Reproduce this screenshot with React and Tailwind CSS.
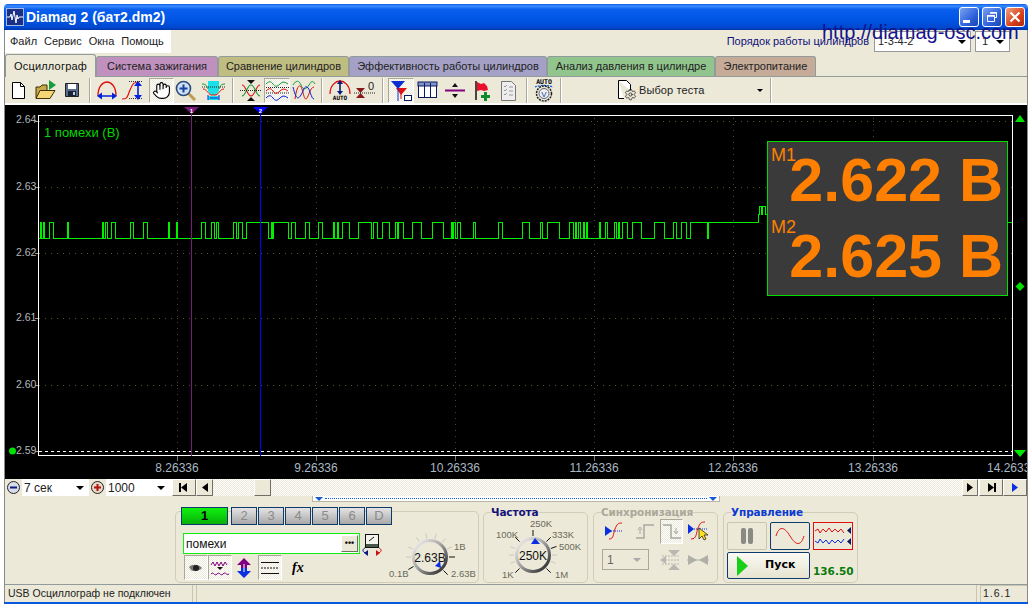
import { Hand, Settings } from "lucide-react";

const FONT = "font-['Liberation_Sans',sans-serif]";

// high parts of the noise trace, in page x
const HIGH = [
  [40, 41], [43, 44], [49, 53], [67, 68], [102, 103], [105, 107], [111, 115], [130, 133], [143, 147],
  [168, 169], [176, 177], [201, 205], [211, 214], [216, 218], [233, 236], [238, 242], [246, 268], [271, 272], [273, 288],
  [291, 295], [305, 309], [318, 322], [333, 334], [337, 338], [342, 349], [358, 371], [373, 377], [382, 389],
  [395, 397], [398, 403], [412, 421], [432, 443], [451, 452], [453, 455], [457, 460], [473, 475], [498, 502], [522, 529],
  [540, 542], [547, 559], [569, 573], [575, 576], [578, 580], [583, 584], [586, 587], [599, 600], [605, 607], [614, 616],
  [618, 619], [622, 627], [632, 641], [654, 664], [673, 676], [681, 686], [690, 707],
];
const HI = 222.5;
const LO = 238.5;

function tracePoints() {
  let pts = `39,${LO}`;
  HIGH.forEach(([a, b]) => {
    pts += ` ${a},${LO} ${a},${HI} ${b},${HI} ${b},${LO}`;
  });
  // stays on the upper level after 708, then the short burst behind the panel
  return pts + ` 708,${LO} 708,${HI} 758,${HI} 758,214 759,214 759,206 761,206 761,214 762,214 762,206 765,206 765,214 767,214`;
}

const GRID_Y = [121, 187, 253, 318, 385];
const GRID_X = [177, 316, 455, 594, 733, 873];
const Y_LABELS = [["2.64", 123], ["2.63", 190], ["2.62", 256], ["2.61", 321], ["2.60", 388], ["2.59", 454]];
const X_LABELS = [["8.26336", 177], ["9.26336", 316], ["10.26336", 455], ["11.26336", 594], ["12.26336", 733], ["13.26336", 873], ["14.26336", 1012]];

function Chart() {
  return (
    <div className="relative h-[374px] bg-black">
      <svg width="1022" height="374" viewBox="5 105 1022 374" className="block">
        <g shapeRendering="crispEdges">
          {GRID_Y.map((y) => (
            <line key={y} x1="39" x2="1012" y1={y + 0.5} y2={y + 0.5} stroke="#55552a" strokeDasharray="1 5" />
          ))}
          {GRID_X.map((x) => (
            <line key={x} x1={x + 0.5} x2={x + 0.5} y1="118" y2="451" stroke="#4a4a20" strokeDasharray="1 5" />
          ))}
          {X_LABELS.map(([, x]) => (
            <line key={x} x1={x + 0.5} x2={x + 0.5} y1="456" y2="461" stroke="#777" />
          ))}
          {GRID_Y.concat(451).map((y) => (
            <line key={y} x1="35" x2="39" y1={y + 0.5} y2={y + 0.5} stroke="#999" />
          ))}
          <rect x="38.5" y="115.5" width="974" height="340" fill="none" stroke="#fff" />
          <line x1="39" x2="1012" y1="451.5" y2="451.5" stroke="#fff" strokeDasharray="3 3" />
          <polyline points={tracePoints()} fill="none" stroke="#00f000" />
          <polyline points={`1007,${HI} 1012,${HI}`} fill="none" stroke="#00f000" />
          <line x1="191.5" x2="191.5" y1="112" y2="456" stroke="#7a1a7a" />
          <line x1="260.5" x2="260.5" y1="112" y2="456" stroke="#0000ff" />
        </g>
        <polygon points="184,107 199,107 191.5,114" fill="#7a1a7a" />
        <polygon points="253,107 268,107 260.5,114" fill="#0000ff" />
        <text x="191.5" y="112.5" fontSize="6" fontWeight="700" fill="#fff" textAnchor="middle">1</text>
        <text x="260.5" y="112.5" fontSize="6" fontWeight="700" fill="#fff" textAnchor="middle">2</text>
        {Y_LABELS.map(([t, y]) => (
          <text key={t} x="16" y={y} fontSize="10.5" fill="#b4b8bc">{t}</text>
        ))}
        {X_LABELS.map(([t, x]) => (
          <text key={t} x={x} y="472" fontSize="12" fill="#a8b8c4" textAnchor="middle">{t}</text>
        ))}
        <polygon points="1020,115 1025,122 1015,122" fill="#00e000" />
        <polygon points="1020,282 1024.5,286.5 1020,291 1015.5,286.5" fill="#00e000" />
        <polygon points="1014,450 1026,450 1020,457" fill="#00e800" />
        <circle cx="12.5" cy="451" r="3.5" fill="#00e000" />
      </svg>
      <div className="absolute left-[39px] top-[20px] text-[13px] leading-[16px] text-[#00d800]">1 помехи (В)</div>
      <div className="absolute left-[762px] top-[36px] h-[155px] w-[241px] bg-[#00e000] p-[1px]">
        <div className="relative h-full bg-[#3a3a3a] text-[#ff8000]">
          <div className="absolute left-[3px] top-[3px] text-[18px] leading-[20px]">M1</div>
          <div className="absolute left-[3px] top-[75px] text-[18px] leading-[20px]">M2</div>
          <div className="pr-[4px] text-right text-[61px] font-bold leading-[76px]">
            <div>2.622 В</div>
            <div>2.625 В</div>
          </div>
        </div>
      </div>
    </div>
  );
}

function Icon({ children, w = 22, h = 22 }) {
  return <svg width={w} height={h} viewBox={`0 0 ${w} ${h}`} className="block">{children}</svg>;
}

const IconNew = () => (
  <Icon>
    <path d="M5.500 3.500h8l4 4v12h-12z" fill="#fff" stroke="#000" />
    <path d="M13.500 3.500v4h4" fill="none" stroke="#000" />
  </Icon>
);
const IconOpen = () => (
  <Icon w={26}>
    <path d="M4 19v-11h4l2-2h5v13z" fill="#c9a84a" stroke="#3a3000" />
    <path d="M4 19.500l4-8h15l-5 8z" fill="#f3d673" stroke="#3a3000" />
    <path d="M17 1v10l7-5z" fill="#1a9a3a" />
  </Icon>
);
const IconSave = () => (
  <Icon>
    <path d="M4.500 4.500h13v13h-13z" fill="#5a6a88" stroke="#222" />
    <rect x="7" y="5" width="8" height="5" fill="#fff" />
    <rect x="7" y="12" width="8" height="5" fill="#16233c" />
    <rect x="12" y="13" width="2" height="3" fill="#ccc" />
  </Icon>
);
const IconArcH = () => (
  <Icon w={24}>
    <path d="M3 17C3 7 8 3 12 3s9 4 9 14" fill="none" stroke="#e01010" strokeWidth="1.3" />
    <path d="M4 17h16" stroke="#0022dd" strokeWidth="1.5" />
    <path d="M2 17l5-3.500v7zM22 17l-5-3.500v7z" fill="#0022dd" />
  </Icon>
);
const IconArcV = () => (
  <Icon w={26}>
    <path d="M1 20c6 0 5-2 8-9s4-8 9-8" fill="none" stroke="#e01010" strokeWidth="1.2" />
    <path d="M8 2.500h13M8 19.500h13" stroke="#333" strokeDasharray="1 1" />
    <path d="M17 5v13" stroke="#0022dd" strokeWidth="1.6" />
    <path d="M17 2l-4 5h8zM17 21l-4-5h8z" fill="#0022dd" />
  </Icon>
);
const IconZoom = () => (
  <Icon w={24}>
    <path d="M14 14l7 7" stroke="#c09a50" strokeWidth="3" />
    <circle cx="9.500" cy="9.500" r="7" fill="#cfe2f5" stroke="#2a4a7a" strokeWidth="1.6" />
    <path d="M9.500 5.500v8M5.500 9.500h8" stroke="#1a3fa0" strokeWidth="2" />
  </Icon>
);
const IconCyan = () => (
  <Icon w={24}>
    <path d="M7 2h11v10l-3 4h-5l-3-4zM7 17h11v4H7z" fill="#1ce0e8" />
    <path d="M1 5c3 0 5 1 6 5M24 5c-3 0-5 1-6 5" fill="none" stroke="#139a3a" />
    <path d="M2 10c4 0 5 5 8 6h5c3-1 4-6 8-6" fill="none" stroke="#e01010" />
    <path d="M1 8h23" stroke="#222" strokeDasharray="1 1" />
    <path d="M9 19h8" stroke="#0022dd" />
    <path d="M7 16v5M18 16v5" stroke="#0022dd" />
  </Icon>
);
const IconCross = () => (
  <Icon w={24}>
    <path d="M3 6c4 0 5 11 9 11s5-11 9-11" fill="none" stroke="#e01010" strokeWidth="1.1" />
    <path d="M3 17c4 0 5-11 9-11s5 11 9 11" fill="none" stroke="#139a3a" strokeWidth="1.1" />
    <path d="M1 11.500h22" stroke="#222" strokeDasharray="1 1" />
    <path d="M8 1h8l-4 4zM8 22h8l-4-4z" fill="#111" />
  </Icon>
);
const IconStack = () => (
  <Icon w={24}>
    <path d="M1 5c3-3 5-3 7 0s4 3 7 0 5-2 8 0" fill="none" stroke="#139a3a" />
    <path d="M1 8.500h23M1 14h23" stroke="#222" strokeDasharray="1 1" />
    <path d="M1 12c3-3 5-3 7 0s4 3 7 0 5-2 8 0" fill="none" stroke="#e01010" />
    <path d="M1 19c3-3 5-3 7 0s4 3 7 0 5-2 8 0" fill="none" stroke="#0022dd" />
  </Icon>
);
const IconOverlap = () => (
  <Icon w={24}>
    <path d="M1 6c3-5 6-5 8 0s5 5 8 0 4-4 6-1" fill="none" stroke="#139a3a" />
    <path d="M3 20C5 6 8 4 10 10s2 10 4 10 4-12 8-12" fill="none" stroke="#e01010" />
    <path d="M1 8c3 12 5 13 8 8s3-9 6-8 4 12 7 12" fill="none" stroke="#0022dd" />
  </Icon>
);
const IconArcAuto = () => (
  <Icon w={24}>
    <path d="M2 15C2 6 8 2 12 2s10 4 10 13" fill="none" stroke="#e01010" strokeWidth="1.3" />
    <path d="M12 4v10" stroke="#0b1a80" strokeWidth="1.6" />
    <path d="M12 1L9 5h6zM12 16l-3-4h6z" fill="#0b1a80" />
    <text x="12" y="21" fontSize="6" fontWeight="700" textAnchor="middle" fontFamily="DejaVu Sans Mono">AUTO</text>
  </Icon>
);
const IconZero = () => (
  <Icon w={24}>
    <path d="M3 9h9l-4.500 5zM3 19h9l-4.500-5z" fill="#8a1a1a" />
    <path d="M1 14h22" stroke="#222" strokeDasharray="1 1" />
    <text x="18" y="11" fontSize="11" textAnchor="middle" fill="#222">0</text>
  </Icon>
);
const IconFilter = () => (
  <Icon w={24}>
    <path d="M2 2h14l-7 8z" fill="#0a2fd0" />
    <path d="M7 9h11l-6 7z" fill="#e01010" />
    <path d="M9 2v20" stroke="#0a2fd0" />
    <path d="M12 10v10" stroke="#e01010" />
    <rect x="15.500" y="16.500" width="7" height="5" fill="#fff" stroke="#0b1a60" />
  </Icon>
);
const IconTable = () => (
  <Icon w={24}>
    <rect x="2.500" y="3.500" width="18" height="15" fill="#fff" stroke="#0b1a60" />
    <rect x="2" y="3" width="19" height="4" fill="#7f93c8" stroke="#0b1a60" />
    <path d="M8.500 4v14M14.500 4v14" stroke="#0b1a60" />
  </Icon>
);
const IconLine = () => (
  <Icon w={24}>
    <path d="M2 11.500h20" stroke="#800080" strokeWidth="2" />
    <path d="M12 4l-3 4h6zM12 19l-3-4h6z" fill="#111" />
  </Icon>
);
const IconFlag = () => (
  <Icon>
    <path d="M5 2v19" stroke="#111" strokeWidth="1.5" />
    <path d="M6 3l4 2 3-1 3 3 1 4-4 1-3-1-4 1z" fill="#e8102a" />
    <path d="M13 13h3v3h3v3h-3v3h-3v-3h-3v-3h3z" fill="#0f8a2f" />
  </Icon>
);
const IconDoc = () => (
  <Icon>
    <path d="M3.500 2.500h10l4 4v15h-14z" fill="#eee" stroke="#777" />
    <path d="M6 7l1 1 2-2M6 11l1 1 2-2M6 15l1 1 2-2M11 8h4M11 12h4M11 16h4" fill="none" stroke="#999" />
  </Icon>
);
const IconAutoV = () => (
  <Icon w={24} h={24}>
    <text x="12" y="6" fontSize="6.5" fontWeight="700" textAnchor="middle" fontFamily="DejaVu Sans Mono">AUTO</text>
    <path d="M3 9c5-2 13-2 18 0" fill="none" stroke="#0a5ad8" strokeDasharray="2 1" strokeWidth="1.3" />
    <circle cx="12" cy="15.500" r="7.500" fill="#e6e6e0" stroke="#222" strokeWidth="1.5" strokeDasharray="2 1" />
    <circle cx="12" cy="15.500" r="5" fill="#eee" stroke="#666" />
    <text x="12" y="18.500" fontSize="8" textAnchor="middle" fill="#0a3ac8">V</text>
  </Icon>
);

function Sep() {
  return <div className="mx-[4px] h-[25px] w-[2px] shrink-0 border-l border-r border-l-[#aca899] border-r-white" />;
}

function Tool({ w = 26, on, children }) {
  return (
    <div
      style={{ width: w }}
      className={
        "flex h-[25px] shrink-0 items-center justify-center " +
        (on
          ? "border border-t-[#aca899] border-l-[#aca899] border-r-white border-b-white bg-[repeating-conic-gradient(#ece9d8_0_25%,#fff_0_50%)] bg-[length:2px_2px]"
          : "")
      }
    >
      {children}
    </div>
  );
}

function Toolbar() {
  return (
    <div className="flex h-[29px] items-center border-t border-b-2 border-t-[#919b9c] border-b-white bg-[#ece9d8]">
      <Tool><IconNew /></Tool>
      <Tool w={28}><IconOpen /></Tool>
      <Tool><IconSave /></Tool>
      <Sep />
      <Tool w={24}><IconArcH /></Tool>
      <Tool w={30}><IconArcV /></Tool>
      <Tool w={25} on><Hand size={19} fill="#fff" strokeWidth={1.4} color="#000" /></Tool>
      <Tool w={24}><IconZoom /></Tool>
      <Tool w={30}><IconCyan /></Tool>
      <Sep />
      <Tool><IconCross /></Tool>
      <Tool on><IconStack /></Tool>
      <Tool w={27}><IconOverlap /></Tool>
      <Sep />
      <Tool w={25}><IconArcAuto /></Tool>
      <Tool><IconZero /></Tool>
      <Sep />
      <Tool on><IconFilter /></Tool>
      <Tool w={28}><IconTable /></Tool>
      <Tool><IconLine /></Tool>
      <Tool w={27}><IconFlag /></Tool>
      <Tool w={27}><IconDoc /></Tool>
      <Sep />
      <Tool w={24}><IconAutoV /></Tool>
      <Sep />
      <div className="ml-[50px] flex w-[141px] shrink-0 items-center text-[11px] tracking-[0.1px] text-[#222]">
        <span className="relative block h-[22px] w-[20px]">
          <svg width="20" height="22" viewBox="0 0 20 22" className="block">
            <path d="M2.500 1.500h8l4 4v6M8 19.500H2.500v-18" fill="#fff" stroke="#000" />
          </svg>
          <Settings size={13} className="absolute left-[8px] top-[9px]" strokeWidth={1.6} color="#333" />
        </span>
        <span className="ml-[3px]">Выбор теста</span>
      </div>
      <span className="h-0 w-0 border-x-[3px] border-t-[3px] border-x-transparent border-t-black" />
      <div className="w-[3px]" />
      <Sep />
    </div>
  );
}

const TABS = [
  ["Система зажигания", "w-[122px] bg-[#c091bf]"],
  ["Сравнение цилиндров", "w-[131px] bg-[#c0bd82]"],
  ["Эффективность работы цилиндров", "w-[198px] bg-[#a5a1c6]"],
  ["Анализ давления в цилиндре", "w-[168px] bg-[#91c58d]"],
  ["Электропитание", "w-[101px] bg-[#c6ab99]"],
];

function Tabs() {
  return (
    <div className="flex h-[23px] items-end bg-[#ece9d8]">
      <div className="z-10 mb-[-1px] flex h-[23px] w-[91px] items-center justify-center rounded-t-[3px] border border-b-0 border-[#919b9c] bg-[#ece9d8] text-[11px] tracking-[0.2px] text-[#111]">
        Осциллограф
      </div>
      {TABS.map(([t, c]) => (
        <div key={t} className={"flex h-[20px] items-center justify-center rounded-t-[3px] border border-b-0 border-[#919b9c] text-[11px] text-[#222] " + c}>
          {t}
        </div>
      ))}
    </div>
  );
}

function WinBtn({ red, children }) {
  return (
    <div
      className={
        "flex h-[20px] w-[20px] items-center justify-center rounded-[3px] border border-white " +
        (red ? "bg-[linear-gradient(135deg,#f0a080,#d8401a_60%,#b02a08)]" : "bg-[linear-gradient(135deg,#7aa2f0,#2f62dc_60%,#1d44b0)]")
      }
    >
      {children}
    </div>
  );
}

function TitleBar() {
  return (
    <div className="flex h-[26px] items-center rounded-t-[4px] bg-[linear-gradient(180deg,#0a5ae6_0,#3c8cff_8%,#0a5fee_20%,#0055e5_60%,#0048d0_90%,#0036a8_100%)] pl-[2px] pr-[3px]">
      <div className="flex h-[18px] w-[18px] items-center justify-center border border-[#9fb8e8] bg-[#1a2f86]">
        <svg width="16" height="16" viewBox="0 0 16 16">
          <path d="M0 8h3l1-3 1 6 2-9 2 12 1-8 1 4 1-2h4" fill="none" stroke="#fff" />
        </svg>
      </div>
      <div className="ml-[2px] flex-1 text-[14px] font-bold text-white">Diamag 2 (бат2.dm2)</div>
      <div className="flex gap-[3px]">
        <WinBtn><span className="mt-[8px] mr-[5px] block h-[3px] w-[7px] bg-white" /></WinBtn>
        <WinBtn>
          <svg width="12" height="12" viewBox="0 0 12 12">
            <path d="M4.500 1.500h6v5h-2M1.500 4.500h7v6h-7z" fill="none" stroke="#fff" />
            <path d="M4 2h7M1 5h8" stroke="#fff" strokeWidth="1.5" />
          </svg>
        </WinBtn>
        <WinBtn red>
          <svg width="12" height="12" viewBox="0 0 12 12">
            <path d="M1.500 1.500l9 9M10.500 1.500l-9 9" stroke="#fff" strokeWidth="2.2" />
          </svg>
        </WinBtn>
      </div>
    </div>
  );
}

function MenuRow() {
  return (
    <div className="relative flex h-[23px] items-center bg-[#ece9d8] text-[11px] text-[#222]">
      <div className="flex h-full w-[166px] items-center gap-[7px] bg-white pl-[5px]">
        <span>Файл</span>
        <span>Сервис</span>
        <span>Окна</span>
        <span>Помощь</span>
      </div>
      <div className="ml-auto mr-[17px] flex items-center text-[#10107a]">
        <span className="mr-[5px]">Порядок работы цилиндров</span>
        <div className="flex h-[21px] w-[97px] items-center justify-between border border-[#999] bg-white pl-[3px] pr-[4px] text-[#222]">
          1-3-4-2
          <span className="h-0 w-0 border-x-[4px] border-t-[4px] border-x-transparent border-t-black" />
        </div>
        <div className="ml-[4px] flex h-[21px] w-[35px] items-center justify-between border border-[#999] bg-white pl-[6px] pr-[5px] text-[#222]">
          1
          <span className="h-0 w-0 border-x-[4px] border-t-[4px] border-x-transparent border-t-black" />
        </div>
      </div>
      <div className="absolute left-[817px] top-[-10px] text-[20px] leading-[24px] text-[#14148c]">http://diamag-osc.com</div>
    </div>
  );
}

function ScrollBtn({ w = 17, children }) {
  return (
    <div
      style={{ width: w }}
      className="flex h-[17px] shrink-0 items-center justify-center border border-t-white border-l-white border-r-[#716f64] border-b-[#716f64] bg-[#ece9d8]"
    >
      {children}
    </div>
  );
}

function RoundGlyph({ plus }) {
  return (
    <div className="flex h-[17px] w-[17px] shrink-0 items-center justify-center bg-[#ece9d8]">
      <svg width="15" height="15" viewBox="0 0 15 15">
        <circle cx="7.500" cy="7.500" r="6" fill={plus ? "#e8d8c8" : "#d8dce8"} stroke="#222" />
        <path d="M4 7.500h7" stroke={plus ? "#b01010" : "#0b1a80"} strokeWidth="2" />
        {plus && <path d="M7.500 4v7" stroke="#b01010" strokeWidth="2" />}
      </svg>
    </div>
  );
}

function Combo({ w, children }) {
  return (
    <div style={{ width: w }} className="flex h-[17px] shrink-0 items-center justify-between bg-white pl-[2px] pr-[5px] text-[12px] text-[#222]">
      {children}
      <span className="h-0 w-0 border-x-[4px] border-t-[4px] border-x-transparent border-t-black" />
    </div>
  );
}

function Tri({ left, color = "#000", bar }) {
  return (
    <svg width="12" height="9" viewBox="0 0 12 9">
      {left ? <path d="M9 0v9L3 4.500z" fill={color} /> : <path d="M3 0v9l6-4.500z" fill={color} />}
      {bar && <rect x={left ? 1 : 9} y="0" width="2" height="9" fill={color} />}
    </svg>
  );
}

function ScrollRow() {
  return (
    <div className="flex h-[17px] bg-white">
      <RoundGlyph />
      <Combo w={67}>7 сек</Combo>
      <RoundGlyph plus />
      <Combo w={64}>1000</Combo>
      <div className="w-[2px]" />
      <ScrollBtn w={24}><Tri left bar /></ScrollBtn>
      <ScrollBtn w={17}><Tri left /></ScrollBtn>
      <div className="flex flex-1 bg-[repeating-conic-gradient(#ece9d8_0_25%,#fff_0_50%)] bg-[length:2px_2px] pl-[41px]">
        <ScrollBtn w={17} />
      </div>
      <ScrollBtn w={16}><Tri /></ScrollBtn>
      <div className="w-[1px]" />
      <ScrollBtn w={24}><Tri bar /></ScrollBtn>
      <ScrollBtn w={24}><Tri color="#0a2fe0" /></ScrollBtn>
    </div>
  );
}

function ChanBtn({ on, children }) {
  return (
    <div
      className={
        "flex h-[18px] items-center justify-center border border-[#0f3a6e] text-[13px] " +
        (on
          ? "w-[47px] bg-[linear-gradient(180deg,#10f010,#08b008)] font-bold text-black"
          : "w-[26px] bg-[linear-gradient(180deg,#e4e4e4,#a8a8a8)] text-[#8a8a8a]")
      }
    >
      {children}
    </div>
  );
}

function Ticks({ cx, cy, list }) {
  return list.map(([deg, dark]) => {
    const a = (deg * Math.PI) / 180;
    const r1 = 19;
    const r2 = dark ? 25 : 24;
    return (
      <line
        key={deg}
        x1={cx + Math.sin(a) * r1}
        y1={cy - Math.cos(a) * r1}
        x2={cx + Math.sin(a) * r2}
        y2={cy - Math.cos(a) * r2}
        stroke={dark ? "#111" : "#c8c8c0"}
      />
    );
  });
}

function Knob({ id, w, h, cx, cy, value, ticks, labels, tri }) {
  return (
    <svg width={w} height={h} viewBox={`0 0 ${w} ${h}`} className="block shrink-0">
      <defs>
        <linearGradient id={id} x1="0" y1="0" x2="1" y2="1">
          <stop offset="0" stopColor="#fafafa" />
          <stop offset="0.45" stopColor="#a8a8a8" />
          <stop offset="1" stopColor="#1c1c1c" />
        </linearGradient>
      </defs>
      <Ticks cx={cx} cy={cy} list={ticks} />
      <circle cx={cx} cy={cy} r="16.5" fill="#ece9d8" stroke={`url(#${id})`} strokeWidth="3" />
      <text x={cx} y={cy + 4.5} fontSize="12" textAnchor="middle" fill="#111">{value}</text>
      <polygon points={tri} fill="#0a2fe0" />
      {labels.map(([t, x, y]) => (
        <text key={t} x={x} y={y} fontSize="9.5" fill="#6a6a58">{t}</text>
      ))}
    </svg>
  );
}

function Group({ title, color, w, children }) {
  return (
    <fieldset style={{ width: w }} className="h-[78px] shrink-0 rounded-[5px] border border-[#d0cdb8]">
      <legend className={"ml-[7px] font-['DejaVu_Sans',sans-serif] text-[10.5px] font-bold leading-[14px] tracking-[-0.1px] " + color}>{title}</legend>
      {children}
    </fieldset>
  );
}

function BottomPanel() {
  return (
    <div className="h-[88px] bg-[#ece9d8]">
      <div className="ml-[307px] flex h-[6px] w-[408px] items-center border border-t-0 border-[#b8b5a4] bg-white px-[2px]">
        <span className="h-0 w-0 border-x-[4px] border-t-[4px] border-x-transparent border-t-[#1a5ad0]" />
        <span className="mx-[2px] flex-1 border-t border-dotted border-[#1a5ad0]" />
        <span className="h-0 w-0 border-x-[4px] border-t-[4px] border-x-transparent border-t-[#1a5ad0]" />
      </div>
      <div className="ml-[170px] mt-[3px] flex items-start">
        {/* channel block */}
        <div className="mt-[6px] h-[72px] w-[304px] shrink-0 rounded-[5px] border border-[#d0cdb8] pl-[5px]">
          <div className="mt-[-5px] flex gap-[1px]">
            <ChanBtn on>1</ChanBtn>
            <div className="w-[1px]" />
            <ChanBtn>2</ChanBtn>
            <ChanBtn>3</ChanBtn>
            <ChanBtn>4</ChanBtn>
            <ChanBtn>5</ChanBtn>
            <ChanBtn>6</ChanBtn>
            <ChanBtn>D</ChanBtn>
          </div>
          <div className="flex">
            <div>
              <div className="ml-[2px] mt-[8px] h-[21px] w-[177px] bg-[#10f010] p-[1px]">
                <div className="flex h-full items-center justify-between bg-white pl-[2px] pr-[1px] text-[12px] text-[#111]">
                  помехи
                  <span className="flex h-[17px] w-[17px] items-center justify-center border border-t-white border-l-white border-r-[#716f64] border-b-[#716f64] bg-[#ece9d8] text-[9px] font-bold leading-none">•••</span>
                </div>
              </div>
              <div className="ml-[3px] mt-[1px] flex items-center">
                <Tool w={24} on>
                  <svg width="16" height="12" viewBox="0 0 16 12">
                    <path d="M1 5c3-3 9-3 13 1-2 3-9 4-11 2z" fill="#777" />
                    <circle cx="8" cy="6" r="3" fill="#222" />
                  </svg>
                </Tool>
                <Tool w={24} on>
                  <svg width="20" height="20" viewBox="0 0 20 20">
                    <path d="M1 7l2-3 2 4 2-4 2 4 2-4 2 4 2-4 2 3M1 16c3-3 3 3 6 0s3 3 6 0 3 2 6 0" fill="none" stroke="#800080" />
                    <path d="M7 9h6l-3 3z" fill="#111" />
                  </svg>
                </Tool>
                <Tool w={24}>
                  <svg width="16" height="20" viewBox="0 0 16 20">
                    <path d="M8 0l7 7H11v3H5V7H1z" fill="#800080" />
                    <path d="M8 20l7-7H11v-3H5v3H1z" fill="#0a2fe0" />
                    <path d="M8 6v8" stroke="#fff" />
                  </svg>
                </Tool>
                <div className="w-[2px]" />
                <Tool w={24} on>
                  <svg width="18" height="16" viewBox="0 0 18 16">
                    <path d="M0 2.500h18M0 13.500h18" stroke="#111" />
                    <path d="M0 8h18" stroke="#111" strokeDasharray="2 1" />
                  </svg>
                </Tool>
                <div className="ml-[10px] font-['Liberation_Serif',serif] text-[14px] font-bold italic leading-none text-black">fx</div>
              </div>
            </div>
            <div className="ml-[1px] mt-[8px]">
              <svg width="22" height="24" viewBox="0 0 22 24" className="block">
                <rect x="4.500" y="1.500" width="13" height="13" fill="#f4f4ec" stroke="#111" />
                <rect x="5" y="11" width="12" height="3" fill="#4a5a4a" />
                <path d="M8 8l5-4" stroke="#111" />
                <path d="M4 15c-3 1-3 5 2 5" fill="none" stroke="#0b1a80" />
                <path d="M18 15c3 1 3 5-2 5" fill="none" stroke="#d01010" />
                <path d="M7 17v6l-4-3z" fill="#0b1a80" />
                <path d="M15 17v6l4-3z" fill="#d01010" />
              </svg>
            </div>
            <div className="ml-[2px] mt-[2px]">
              <Knob
                id="k1"
                w={92}
                h={54}
                cx={45}
                cy={30}
                value="2.63В"
                tri="55,34 50,39 56,41"
                ticks={[[-120, 1], [-90, 0], [-65, 0], [-35, 0], [-10, 0], [15, 0], [40, 0], [65, 0], [90, 1], [135, 1]]}
                labels={[["1В", 69, 23], ["0.1В", 4, 50], ["2.63В", 66, 50]]}
              />
            </div>
          </div>
        </div>
        <div className="w-[4px]" />
        <Group title="Частота" color="text-[#14147a]" w={105}>
          <div className="mt-[-3px]">
            <Knob
              id="k2"
              w={103}
              h={66}
              cx={49}
              cy={39}
              value="250K"
              tri="51,22 47,28 56,28"
              ticks={[[-135, 1], [-110, 0], [-90, 0], [-70, 0], [-45, 1], [0, 1], [45, 1], [70, 1], [90, 0], [110, 0], [135, 1]]}
              labels={[["250K", 46, 11], ["100K", 12, 22], ["333K", 68, 22], ["500K", 75, 34], ["1K", 18, 62], ["1M", 71, 62]]}
            />
          </div>
        </Group>
        <div className="w-[5px]" />
        <Group title="Синхронизация" color="text-[#aaa89a]" w={125}>
          <div className="ml-[6px] flex h-[24px] items-center">
            <Tool w={30}>
              <svg width="20" height="18" viewBox="0 0 20 18">
                <path d="M4 17c5 0 4-5 6-10s3-6 7-6" fill="none" stroke="#e01010" />
                <path d="M2 9h15" stroke="#0a2fe0" strokeDasharray="1 1" />
                <path d="M0 4l7 5-7 5z" fill="#0a2fe0" />
              </svg>
            </Tool>
            <Tool w={30}>
              <svg width="20" height="18" viewBox="0 0 20 18">
                <path d="M1 16h8V3h10" fill="none" stroke="#a8a8a0" strokeWidth="1.5" />
                <path d="M5 12V7M3 8l2-3 2 3" fill="none" stroke="#a8a8a0" />
              </svg>
            </Tool>
            <Tool w={23} on>
              <svg width="20" height="18" viewBox="0 0 20 18">
                <path d="M1 3h8v13h10" fill="none" stroke="#a8a8a0" strokeWidth="1.5" />
                <path d="M14 6v5M12 9l2 3 2-3" fill="none" stroke="#a8a8a0" />
              </svg>
            </Tool>
            <Tool w={32}>
              <svg width="22" height="20" viewBox="0 0 22 20">
                <path d="M3 18c6 0 5-6 7-11s3-6 7-6" fill="none" stroke="#e01010" />
                <path d="M2 8h18" stroke="#0a2fe0" strokeDasharray="1 1" />
                <path d="M0 3l6 5-6 5z" fill="#0a2fe0" />
                <path d="M11 7v11l3-3 2 4 2-1-2-4h4z" fill="#ffe020" stroke="#111" strokeWidth="0.7" />
              </svg>
            </Tool>
          </div>
          <div className="ml-[8px] mt-[6px] flex items-center">
            <div className="flex h-[21px] w-[47px] items-center justify-between border border-[#aca899] pl-[4px] pr-[7px] text-[12px] text-[#666]">
              1
              <span className="h-0 w-0 border-x-[4px] border-t-[4px] border-x-transparent border-t-[#aaa]" />
            </div>
            <div className="ml-[11px] w-[24px]">
              <svg width="22" height="20" viewBox="0 0 22 20">
                <path d="M8 0h12l-6 6zM8 20h12l-6-6z" fill="#b8b8b0" />
                <path d="M2 6h18M2 14h18M2 10h18" stroke="#b8b8b0" strokeDasharray="2 1" />
                <path d="M0 10l6-4v8z" fill="#b8b8b0" />
              </svg>
            </div>
            <div className="ml-[3px]">
              <svg width="22" height="12" viewBox="0 0 22 12">
                <path d="M1 1l9 5-9 5zM21 1l-9 5 9 5z" fill="#b0b0a8" />
                <path d="M0 6h22" stroke="#b0b0a8" />
              </svg>
            </div>
          </div>
        </Group>
        <div className="w-[5px]" />
        <Group title="Управление" color="text-[#0a3ad0]" w={135}>
          <div className="ml-[3px] mt-[3px] flex gap-[3px]">
            <div className="flex h-[28px] w-[40px] items-center justify-center rounded-[2px] border border-[#c8c5b0]">
              <svg width="14" height="16" viewBox="0 0 14 16">
                <rect x="1" y="0" width="5" height="16" rx="2" fill="#8a8a84" />
                <rect x="8" y="0" width="5" height="16" rx="2" fill="#8a8a84" />
              </svg>
            </div>
            <div className="flex h-[28px] w-[40px] items-center justify-center rounded-[2px] border border-[#0f3a6e]">
              <svg width="30" height="20" viewBox="0 0 30 20">
                <path d="M1 10C4 0 9 0 15 10s11 10 14 0" fill="none" stroke="#e01010" />
              </svg>
            </div>
            <div className="flex h-[28px] w-[40px] items-center justify-center border border-[#e01010]">
              <svg width="36" height="22" viewBox="0 0 36 22">
                <path d="M0 6l3-2 2 4 3-4 3 3 3-4 3 4 3-3 3 3 3-3 3 4" fill="none" stroke="#e01010" />
                <path d="M0 16l3 2 2-4 3 4 3-3 3 4 3-4 3 3 3-3 3 3 3-4" fill="none" stroke="#0a2fe0" />
                <path d="M36 2v7l-4-3.500zM36 13v7l-4-3.500z" fill="#0b1a60" />
              </svg>
            </div>
          </div>
          <div className="ml-[3px] mt-[2px] flex items-end">
            <div className="flex h-[27px] w-[83px] items-center rounded-[2px] border border-[#0f3a6e] bg-[linear-gradient(180deg,#fbfaf4,#e6e3d0)] pl-[9px]">
              <svg width="12" height="20" viewBox="0 0 12 20">
                <path d="M0 0l11 10L0 20z" fill="#18d018" />
              </svg>
              <span className="ml-[16px] font-['DejaVu_Sans',sans-serif] text-[11px] font-bold text-black">Пуск</span>
            </div>
            <span className="ml-[3px] font-['DejaVu_Sans',sans-serif] text-[10.5px] font-bold leading-[16px] text-[#0a7a0a]">136.50</span>
          </div>
        </Group>
      </div>
    </div>
  );
}

function StatusBar() {
  return (
    <div className="flex h-[18px] border-t border-[#919b9c] bg-[#ece9d8] text-[10.5px] text-[#222]">
      <div className="flex w-[188px] items-center border-r border-[#c8c5b0] pl-[3px]">USB Осциллограф не подключен</div>
      <div className="ml-[3px] flex-1 border-l border-r border-[#c8c5b0]" />
      <div className="ml-[3px] flex w-[47px] items-center border-l border-t border-[#c8c5b0] pl-[2px] tracking-[1px]">1.6.1</div>
    </div>
  );
}

export default function App() {
  return (
    <div className={"h-[608px] w-[1032px] overflow-hidden bg-white pl-[4px] pt-[4px] " + FONT}>
      <div className="flex h-[600px] w-[1024px] flex-col border-b-2 border-[#0a5ae0]">
        <TitleBar />
        <div className="flex flex-1 flex-col border-x border-x-[#8a8a8a]">
          <MenuRow />
          <Tabs />
          <Toolbar />
          <Chart />
          <ScrollRow />
          <BottomPanel />
          <StatusBar />
        </div>
      </div>
    </div>
  );
}
